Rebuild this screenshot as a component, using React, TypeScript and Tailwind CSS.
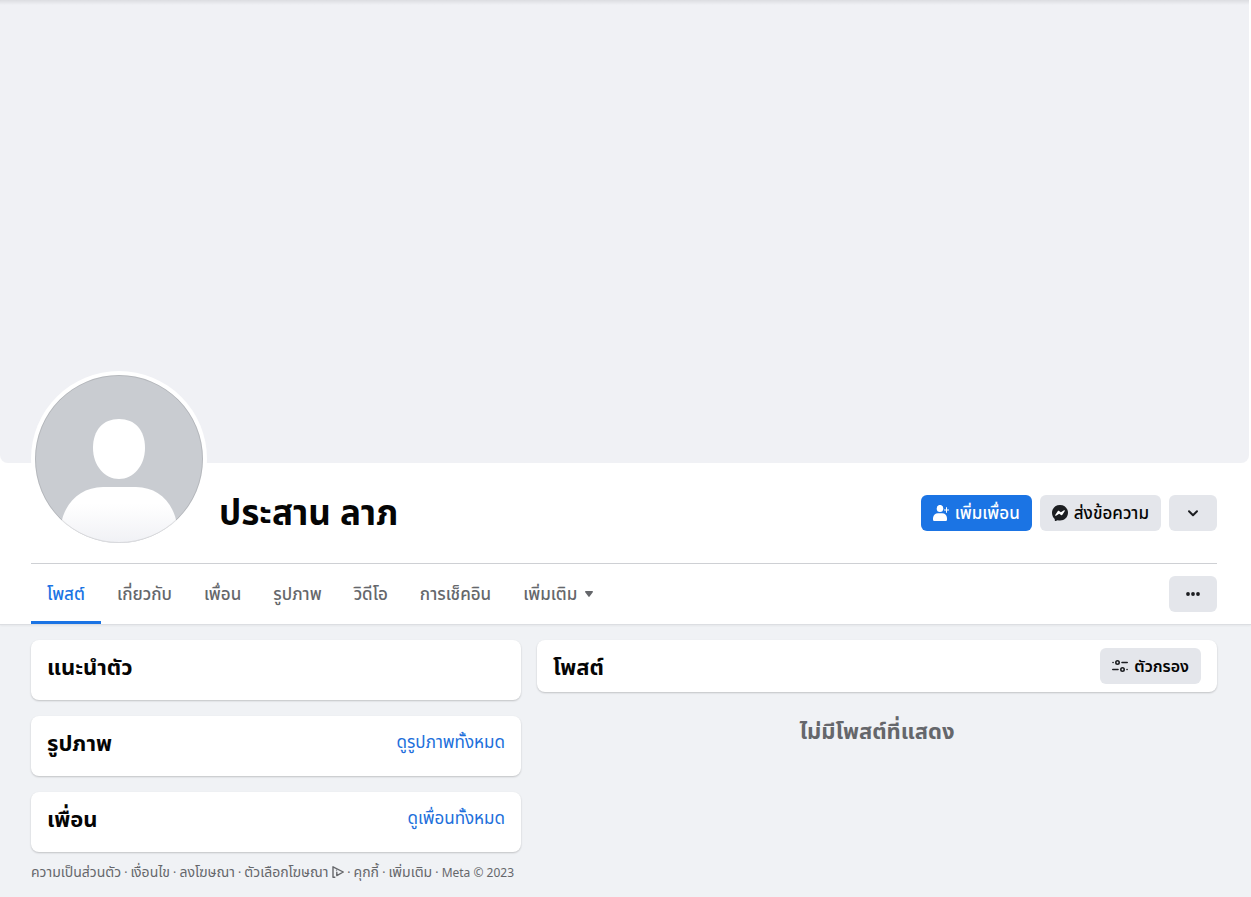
import React from 'react';

const tabs = ['โพสต์', 'เกี่ยวกับ', 'เพื่อน', 'รูปภาพ', 'วิดีโอ', 'การเช็คอิน'];

const cards = [
  { title: 'แนะนำตัว', link: '' },
  { title: 'รูปภาพ', link: 'ดูรูปภาพทั้งหมด' },
  { title: 'เพื่อน', link: 'ดูเพื่อนทั้งหมด' },
];

const Avatar: React.FC = () => (
  <svg viewBox="0 0 176 176" className="w-44 h-44 -mt-[92px] shrink-0 relative" role="img" aria-label="ประสาน ลาภ">
    <defs>
      <clipPath id="avatar-clip">
        <circle cx="88" cy="88" r="84" />
      </clipPath>
      <linearGradient id="avatar-body" x1="0" y1="116" x2="0" y2="172" gradientUnits="userSpaceOnUse">
        <stop offset="0.3" stopColor="#fff" />
        <stop offset="1" stopColor="#f0f1f5" />
      </linearGradient>
    </defs>
    <circle cx="88" cy="88" r="88" fill="#fff" />
    <g clipPath="url(#avatar-clip)">
      <rect width="176" height="176" fill="#c9ccd1" />
      <path d="M88 48c16 0 26 11 26 29 0 18-12 31-26 31S62 95 62 77c0-18 10-29 26-29z" fill="#fff" />
      <path d="M30 154c3-22 20-38 42-38h33c22 0 38 16 41 38v22H30z" fill="url(#avatar-body)" />
    </g>
    <circle cx="88" cy="88" r="83.500" fill="none" stroke="#000" strokeOpacity="0.1" />
  </svg>
);

const AddFriendIcon: React.FC = () => (
  <svg viewBox="0 0 16 16" className="w-4 h-4 shrink-0" fill="currentColor" aria-hidden="true">
    <ellipse cx="7" cy="3.500" rx="3.300" ry="3.600" />
    <path d="M5 8.300h4.200c2.600 0 4.500 2 4.800 4.700v1.400c0 .9-.7 1.600-1.600 1.600H1.600C.7 16 0 15.300 0 14.400V13c.3-2.700 2.400-4.700 5-4.700z" />
    <path d="M13 2.300h1v2.200h2v1h-2v2.200h-1V5.500h-2v-1h2z" />
  </svg>
);

const MessengerIcon: React.FC = () => (
  <svg viewBox="0 0 16 16" className="w-4 h-4 shrink-0" aria-hidden="true">
    <path d="M8 0c4.500 0 8 3.300 8 7.800s-3.500 7.700-8 7.700c-.8 0-1.600-.1-2.300-.3l-2 .8c-.5.200-.9-.1-.9-.6l-.1-1.500C1 12.500 0 10.400 0 7.800 0 3.300 3.500 0 8 0z" fill="#1c1e21" />
    <path d="M3.200 10.100l2.500-3.900c.3-.5 1-.6 1.400-.3l1.800 1.400 3.100-2c.5-.3 1.100.1.800.6l-2.400 3.900c-.3.500-1 .6-1.400.3L7.200 8.700l-3.200 2c-.5.400-1.100 0-.8-.6z" fill="#fff" />
  </svg>
);

const ChevronIcon: React.FC = () => (
  <svg viewBox="0 0 16 16" className="w-4 h-4" fill="none" stroke="#1c1e21" strokeWidth="2" strokeLinecap="round" strokeLinejoin="round" aria-hidden="true">
    <path d="M4 6.200l4 4 4-4" />
  </svg>
);

const DotsIcon: React.FC = () => (
  <svg viewBox="0 0 16 16" className="w-4 h-4" fill="#1c1e21" aria-hidden="true">
    <circle cx="3" cy="8" r="1.900" />
    <circle cx="8" cy="8" r="1.900" />
    <circle cx="13" cy="8" r="1.900" />
  </svg>
);

const FilterIcon: React.FC = () => (
  <svg viewBox="0 0 16 16" className="w-4 h-4 shrink-0" fill="none" stroke="#1c1e21" strokeWidth="1.600" strokeLinecap="round" aria-hidden="true">
    <circle cx="5.500" cy="4.500" r="1.700" />
    <path d="M1 4.500h.1M10 4.500h5.200M.8 11.500H6M15 11.500h.1" />
    <circle cx="10.500" cy="11.500" r="1.700" />
  </svg>
);

const AdChoicesIcon: React.FC = () => (
  <svg viewBox="0 0 12 12" className="inline w-3 h-3 align-[-1px]" fill="none" stroke="#65676b" strokeWidth="1.400" strokeLinejoin="round" strokeLinecap="round" aria-hidden="true">
    <path d="M2.800 11.200H1V.8L11.300 6 4.800 9.600V6.200" />
    <path d="M4.500 4.100h.1" />
  </svg>
);

export default function App() {
  return (
    <div className="min-h-screen bg-[#f0f2f5] text-[#050505] font-['Noto_Sans','Noto_Sans_Thai',sans-serif]">
      <header className="bg-white border-b border-[#dcdee2] shadow-xs">
        <div className="mr-0.5 aspect-[1249/463] rounded-b-lg bg-[#f0f1f5] bg-linear-to-b from-[#dcdde1] to-[#f0f1f5] to-[5px]" />
        <div className="pl-[31px] pr-[34px]">
          <div className="flex items-end gap-3 pb-4 border-b border-[#ced0d4]">
            <Avatar />
            <h1 className="flex-1 mb-4 text-[35px] leading-[38px] font-bold whitespace-nowrap">ประสาน ลาภ</h1>
            <div className="flex gap-2 mb-4 text-[17px] leading-5 font-medium">
              <button className="flex items-center gap-1.5 h-9 px-3 rounded-md bg-[#1b74e4] text-white whitespace-nowrap">
                <AddFriendIcon />
                เพิ่มเพื่อน
              </button>
              <button className="flex items-center gap-1.5 h-9 px-3 rounded-md bg-[#e4e6eb] whitespace-nowrap">
                <MessengerIcon />
                ส่งข้อความ
              </button>
              <button aria-label="ดูตัวเลือก" className="flex items-center justify-center w-12 h-9 rounded-md bg-[#e4e6eb]">
                <ChevronIcon />
              </button>
            </div>
          </div>
          <div className="flex items-center justify-between">
            <nav className="flex text-[17px] leading-5 font-medium text-[#65676b]">
              {tabs.map((tab, i) => (
                <a
                  key={tab}
                  href="#"
                  className={
                    i === 0
                      ? 'flex items-center h-[60px] px-4 pt-[3px] border-b-3 border-[#1b74e4] text-[#1b74e4]'
                      : 'flex items-center h-[60px] px-4'
                  }
                >
                  {tab}
                </a>
              ))}
              <button className="flex items-center gap-2 h-[60px] px-4">
                เพิ่มเติม
                <svg viewBox="0 0 8 6" className="w-2 h-1.5" fill="currentColor" aria-hidden="true">
                  <path d="M.8 0h6.400c.7 0 1 .8.600 1.300L4.600 5.600c-.3.400-.9.400-1.200 0L.2 1.300C-.2.800.1 0 .8 0z" />
                </svg>
              </button>
            </nav>
            <button aria-label="เพิ่มเติม" className="flex items-center justify-center w-12 h-9 rounded-md bg-[#e4e6eb]">
              <DotsIcon />
            </button>
          </div>
        </div>
      </header>

      <main className="flex items-start gap-4 pt-[15px] pl-[31px] pr-[34px]">
        <div className="flex-[490] min-w-0">
          <div className="flex flex-col gap-4">
            {cards.map((card) => (
              <section key={card.title} className="flex justify-between h-[60px] px-4 pt-4 bg-white rounded-lg shadow-[0_1px_2px_rgba(0,0,0,0.2)]">
                <h2 className="text-[22px] leading-5 font-bold">{card.title}</h2>
                {card.link && (
                  <a href="#" className="text-[17px] leading-5 text-[#216fdb]">
                    {card.link}
                  </a>
                )}
              </section>
            ))}
          </div>
          <footer className="pt-3 text-xs leading-4 text-[#65676b] whitespace-nowrap [&_a]:text-sm [&_a]:leading-4">
            <a href="#">ความเป็นส่วนตัว</a> · <a href="#">เงื่อนไข</a> · <a href="#">ลงโฆษณา</a> ·{' '}
            <a href="#">
              ตัวเลือกโฆษณา <AdChoicesIcon />
            </a>{' '}
            · <a href="#">คุกกี้</a> · <a href="#">เพิ่มเติม</a> · Meta © 2023
          </footer>
        </div>

        <div className="flex-[680] min-w-0">
          <section className="flex items-center justify-between h-[52px] px-4 bg-white rounded-lg shadow-[0_1px_2px_rgba(0,0,0,0.2)]">
            <h2 className="text-[22px] leading-5 font-bold">โพสต์</h2>
            <button className="flex items-center gap-1.5 h-9 px-3 rounded-md bg-[#e4e6eb] text-base leading-5 font-semibold whitespace-nowrap">
              <FilterIcon />
              ตัวกรอง
            </button>
          </section>
          <p className="mt-7 text-center text-[22px] leading-5 font-bold text-[#65676b]">ไม่มีโพสต์ที่แสดง</p>
        </div>
      </main>
    </div>
  );
}
